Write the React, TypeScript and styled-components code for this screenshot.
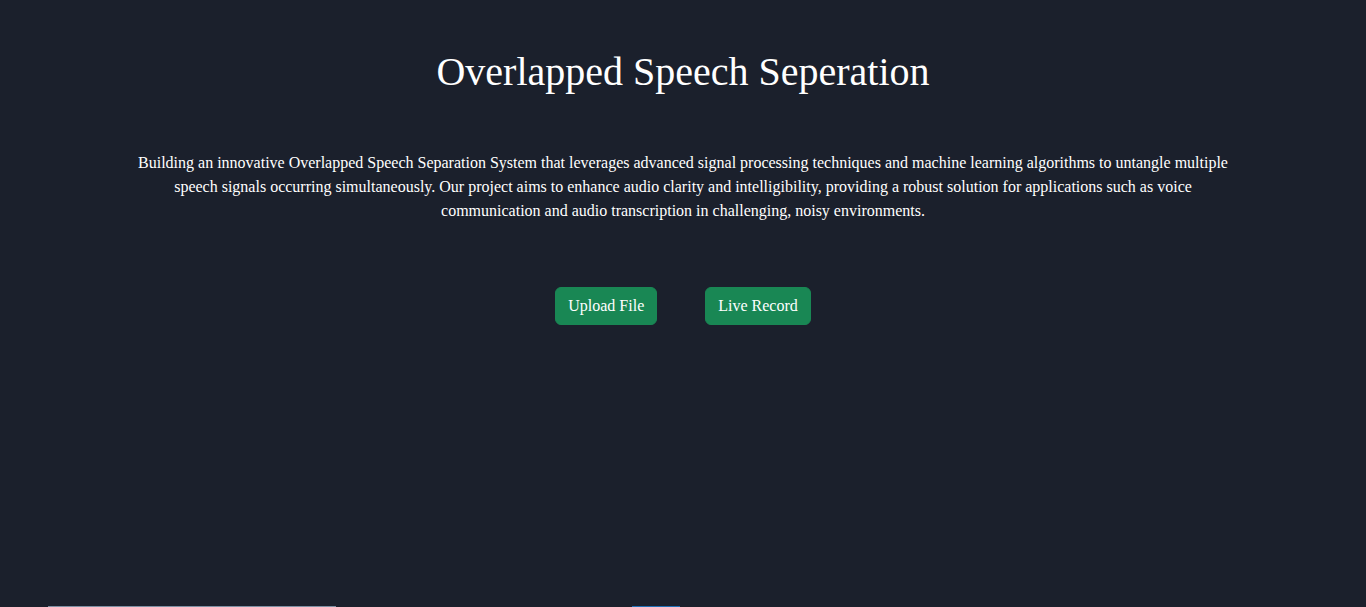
import React from "react";
import styled, { createGlobalStyle } from "styled-components";

const GlobalStyle = createGlobalStyle`
  body {
    margin: 0;
    background: #1b202c;
    color: #fff;
    font-family: "Liberation Serif", "Times New Roman", serif;
  }
`;

const App = () => {
  return (
    <>
      <GlobalStyle />
      <Page>
        <Hero>
          <Title>Overlapped Speech Seperation</Title>
          <Description>
            Building an innovative Overlapped Speech Separation System that leverages advanced signal
            processing techniques and machine learning algorithms to untangle multiple speech signals
            occurring simultaneously. Our project aims to enhance audio clarity and intelligibility,
            providing a robust solution for applications such as voice communication and audio
            transcription in challenging, noisy environments.
          </Description>
          <ButtonRow>
            <ActionButton>Upload File</ActionButton>
            <ActionButton>Live Record</ActionButton>
          </ButtonRow>
        </Hero>
        <BelowFold>
          <Track />
          <Spacer />
          <Knob />
        </BelowFold>
      </Page>
    </>
  );
};

const Page = styled.div`
  min-height: 100vh;
  display: flex;
  flex-direction: column;
`;

const Hero = styled.div`
  height: 606px;
  display: flex;
  flex-direction: column;
  align-items: center;
  padding: 48px 130px 0;
  box-sizing: border-box;
`;

const Title = styled.h1`
  margin: 0;
  font-size: 40px;
  font-weight: 400;
  line-height: 48px;
`;

const Description = styled.p`
  margin: 55px 0 0;
  font-size: 16px;
  line-height: 24px;
  text-align: center;
  max-width: 1100px;
`;

const ButtonRow = styled.div`
  display: flex;
  gap: 48px;
  margin-top: 64px;
`;

const ActionButton = styled.button`
  background: #198754;
  color: #fff;
  border: 1px solid #198754;
  border-radius: 6px;
  padding: 6px 12px;
  font-family: "Liberation Serif", "Times New Roman", serif;
  font-size: 16px;
  line-height: 24px;
  cursor: pointer;
`;

const BelowFold = styled.div`
  display: flex;
  padding-left: 48px;
  height: 40px;
`;

const Track = styled.div`
  width: 288px;
  height: 4px;
  background: #7d8fa3;
`;

const Spacer = styled.div`
  width: 296px;
`;

const Knob = styled.div`
  width: 48px;
  height: 20px;
  background: #1f6fb5;
`;

export default App;
